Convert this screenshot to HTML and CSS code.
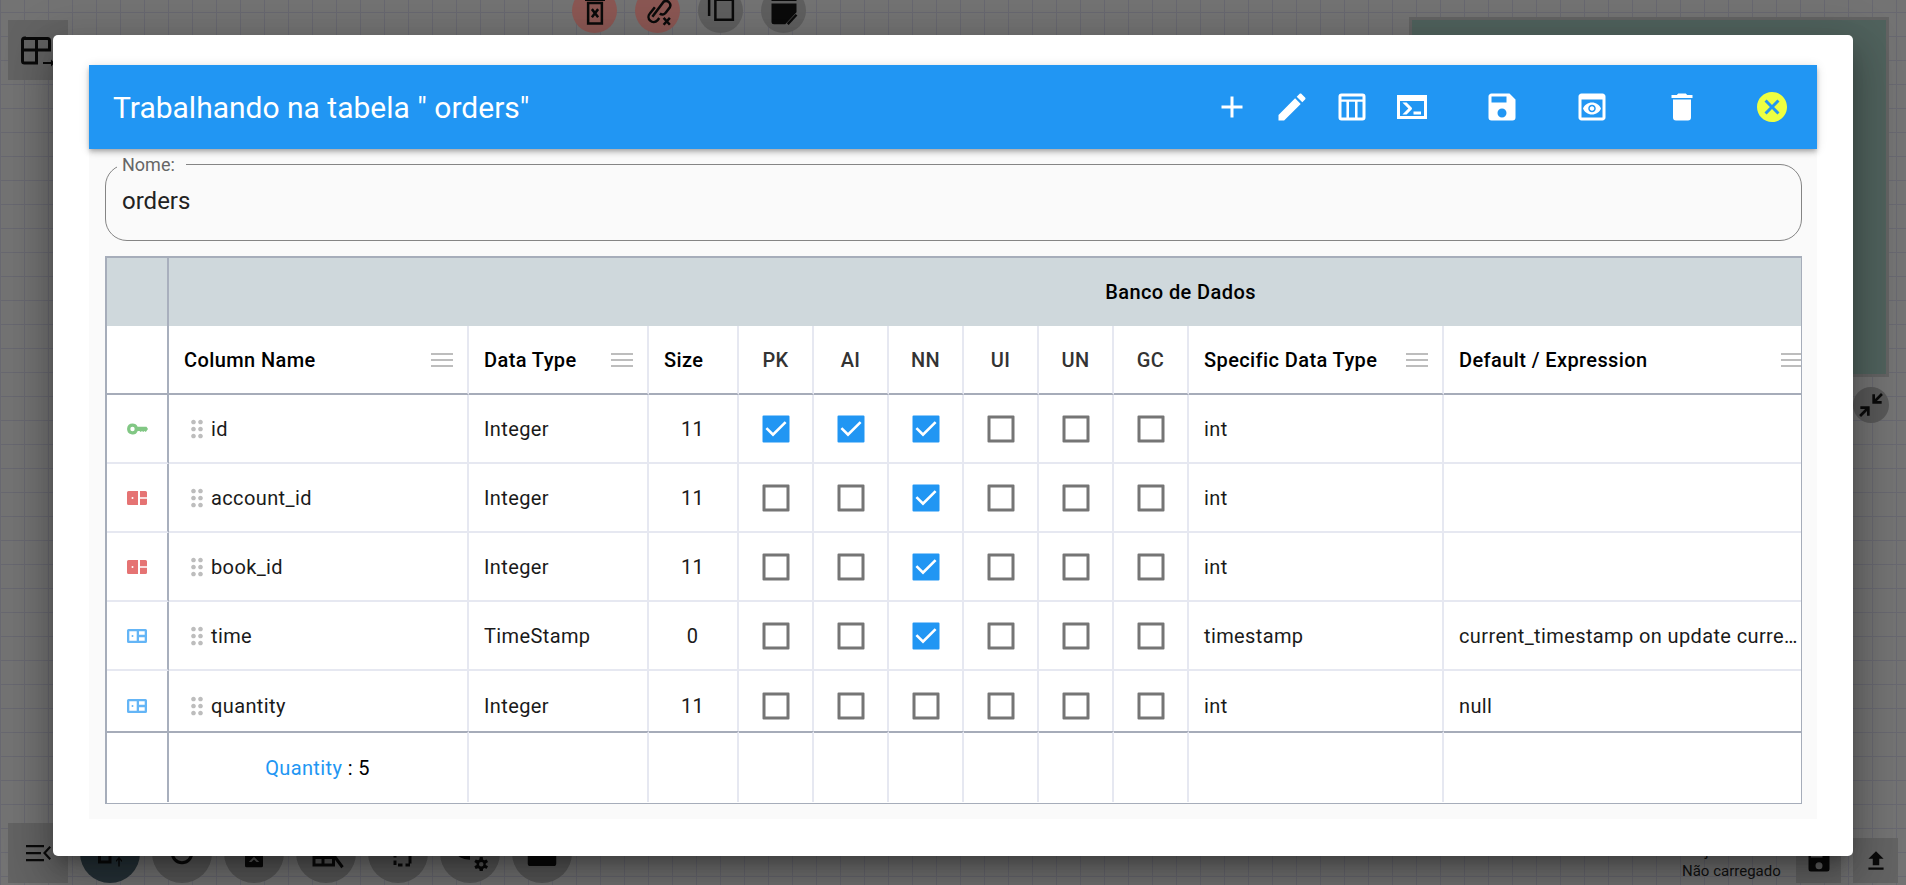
FILE: index.html
```html
<!DOCTYPE html>
<html lang="pt">
<head>
<meta charset="utf-8">
<title>Trabalhando na tabela</title>
<link rel="stylesheet" href="styles.css">
</head>
<body>
<svg class="sprite" aria-hidden="true">
  <symbol id="i-on" viewBox="0 0 24 24"><path fill-rule="evenodd" d="M3.700 3h16.600a.7.7 0 0 1 .7.7v16.600a.7.7 0 0 1-.7.7H3.700a.7.7 0 0 1-.7-.7V3.700a.7.7 0 0 1 .7-.7zM10,17L19,8L17.800,6.900L10,14.500L6.200,10.800L5,12Z"/></symbol>
  <symbol id="i-off" viewBox="0 0 24 24"><path fill-rule="evenodd" d="M3.700 3h16.600a.7.7 0 0 1 .7.7v16.600a.7.7 0 0 1-.7.7H3.700a.7.7 0 0 1-.7-.7V3.700a.7.7 0 0 1 .7-.7zM5 5V19H19V5Z"/></symbol>
  <symbol id="i-drag" viewBox="0 0 24 24"><path d="M11 18c0 1.100-.9 2-2 2s-2-.9-2-2 .9-2 2-2 2 .9 2 2zm-2-8c-1.100 0-2 .9-2 2s.9 2 2 2 2-.9 2-2-.9-2-2-2zm0-6c-1.100 0-2 .9-2 2s.9 2 2 2 2-.9 2-2-.9-2-2-2zm6 4c1.100 0 2-.9 2-2s-.9-2-2-2-2 .9-2 2 .9 2 2 2zm0 2c-1.100 0-2 .9-2 2s.9 2 2 2 2-.9 2-2-.9-2-2-2zm0 6c-1.100 0-2 .9-2 2s.9 2 2 2 2-.9 2-2-.9-2-2-2z"/></symbol>
  <symbol id="i-key" viewBox="0 0 24 24"><path fill-rule="evenodd" d="M7.500 6.500a5.500 5.500 0 0 1 5.100 3.300H21.500L23 12 20.800 15 19.500 14 18.200 15 17 14 15.700 15 14.500 14H12.700A5.500 5.500 0 1 1 7.500 6.500zM7.500 9.800a2.200 2.200 0 1 0 0 4.400 2.200 2.200 0 0 0 0-4.400z"/></symbol>
  <symbol id="i-fk" viewBox="0 0 24 24"><path fill-rule="evenodd" d="M3.500 5H13v14H3.500A1.500 1.500 0 0 1 2 17.500V6.500A1.500 1.500 0 0 1 3.500 5zM7.500 11a1 1 0 1 0 0 2 1 1 0 0 0 0-2zM15 5h5.500A1.500 1.500 0 0 1 22 6.500V11.200H15zM15 12.800h7v4.700a1.500 1.500 0 0 1-1.500 1.500H15z"/></symbol>
  <symbol id="i-col" viewBox="0 0 24 24"><path fill-rule="evenodd" d="M3.500 5h17A1.500 1.500 0 0 1 22 6.500v11a1.500 1.500 0 0 1-1.500 1.500h-17A1.500 1.500 0 0 1 2 17.500v-11A1.500 1.500 0 0 1 3.500 5zM4.300 7.300v9.400h7.400V7.300zM14 7.300v3.500h5.700V7.300zM14 13.200v3.500h5.700v-3.500zM7.500 11a1 1 0 1 0 0 2 1 1 0 0 0 0-2z"/></symbol>
</svg>

<div class="canvas">
  <div class="node"></div>

  <div class="tool tool-tl">
    <svg class="ico-top" viewBox="0 0 34 32"><path class="ln thick" d="M3.500 2.500h23a2 2 0 0 1 2 2v9.500H15.500v13H3.500a2 2 0 0 1-2-2v-21a2 2 0 0 1 2-2zM15.500 2.500v24.500M1.500 14H15.500"/><path d="M22 26h8v-2.500l3.500 3.500-3.500 3.500V28h-8z"/></svg>
  </div>
  <div class="tool tool-bl">
    <svg class="ico-28" viewBox="0 0 28 24"><path d="M2 4h18v2.200H2zM2 11h15v2.200H2zM2 18h18v2.200H2zM27 6.500l-5 5.500 5 5.500-1.500 1.500L19 12l6.500-7z"/></svg>
  </div>

  <div class="row-top">
    <span class="circle-s danger"><svg class="ico-30" viewBox="0 0 24 24"><path class="ln" d="M6.500 5.500h11v16.500h-11zM4 3h16M9 1h6M9.500 10.500l5 6.500M14.500 10.500l-5 6.500"/></svg></span>
    <span class="circle-s danger"><svg class="ico-30" viewBox="0 0 24 24"><path class="ln" d="M9.500 9l-4 5a4 4 0 0 0 6 5.500l1.500-2M7.500 16.500l9-12a3.500 3.500 0 0 1 5 4.500l-3.500 4.500a3 3 0 0 1-4.500 .5"/><path class="ln" d="M16.500 17.500l5 5.500M21.500 17.500l-5 5.500"/></svg></span>
    <span class="circle-s"><svg class="ico-30" viewBox="0 0 24 24"><path class="ln" d="M2.500 0v16M7.500 3h14v16h-14z"/></svg></span>
    <span class="circle-s"><svg class="ico-30" viewBox="0 0 24 24"><path d="M2 0h20v4H2zM2 6h20v7l-9 9.500H4a2 2 0 0 1-2-2z"/><path class="ln" d="M15 22.500l7-7.500"/></svg></span>
  </div>

  <div class="row-bottom">
    <span class="circle-l dark"><svg class="ico-36" viewBox="0 0 24 24"><path class="ln" d="M5 6h7v12H5z"/><path d="M17.500 21v-4.500L16 18v-1.200l2-2.300 2 2.300V18l-1.500-1.500V21z"/></svg></span>
    <span class="circle-l"><svg class="ico-36" viewBox="0 0 24 24"><circle class="ln" cx="12" cy="12" r="6.500"/></svg></span>
    <span class="circle-l"><svg class="ico-36" viewBox="0 0 24 24"><path fill-rule="evenodd" d="M7 3h10a1 1 0 0 1 1 1v16.500a1 1 0 0 1-1 1H7a1 1 0 0 1-1-1V4a1 1 0 0 1 1-1zM12 14.500l-3.500 3.500h1.800l1.700-1.700 1.700 1.700h1.800z"/></svg></span>
    <span class="circle-l"><svg class="ico-36" viewBox="0 0 24 24"><path class="ln" d="M4 5h13v15H4zM4 15h14M10 15v5M16 12l7 9.500"/></svg></span>
    <span class="circle-l"><svg class="ico-36" viewBox="0 0 24 24"><path class="ln dash" d="M3 4h17v15M10 10h10v10H10z"/></svg></span>
    <span class="circle-l"><svg class="ico-36" viewBox="0 0 24 24"><path class="ln thick" d="M4 10c0 3 3 5 8 5"/><path d="M22.500 20l1.500.8-.9 1.700-1.600-.5-.8.6-.2 1.800h-2l-.3-1.800-.8-.5-1.600.5-.9-1.700 1.500-.9v-1l-1.500-1 .9-1.700 1.600.6.8-.5.3-1.800h2l.2 1.800.8.5 1.600-.6.900 1.700-1.500 1zM19.500 18a1.500 1.500 0 1 0 0 3 1.500 1.500 0 0 0 0-3z"/></svg></span>
    <span class="circle-l"><svg class="ico-36" viewBox="0 0 24 24"><path d="M4 3h16a1.500 1.500 0 0 1 1.500 1.500V19a1.700 1.700 0 0 1-1.700 1.700H4.200A1.700 1.700 0 0 1 2.500 19V4.500A1.500 1.500 0 0 1 4 3z"/></svg></span>
  </div>

  <span class="circle-m shrink"><svg class="ico-32" viewBox="0 0 24 24"><path d="M19.500,3.090L15,7.590V4H13V11H20V9H16.410L20.910,4.500L19.500,3.090M4,13V15H7.590L3.090,19.500L4.500,20.910L9,16.410V20H11V13H4Z"/></svg></span>

  <div class="project">Projeto atual:<br>Não carregado</div>
  <div class="tool-sm tool-save"><svg class="ico-28" viewBox="0 0 24 24"><path d="M15,9H5V5H15M12,19A3,3 0 0,1 9,16A3,3 0 0,1 12,13A3,3 0 0,1 15,16A3,3 0 0,1 12,19M17,3H5C3.890,3 3,3.900 3,5V19A2,2 0 0,0 5,21H19A2,2 0 0,0 21,19V7L17,3Z"/></svg></div>
  <div class="tool-sm tool-upload"><svg class="ico-26" viewBox="0 0 24 24"><path d="M9,16V10H5L12,3L19,10H15V16H9M5,20V18H19V20H5Z"/></svg></div>
</div>

<div class="overlay">
  <section class="dialog">
    <header class="bar">
      <h1 class="bar-title">Trabalhando na tabela " orders"</h1>
      <div class="bar-actions">
        <div class="group">
          <button class="act"><svg viewBox="0 0 24 24"><path d="M19,13H13V19H11V13H5V11H11V5H13V11H19V13Z"/></svg></button>
          <button class="act"><svg viewBox="0 0 24 24"><path d="M20.710,7.040C21.100,6.650 21.100,6 20.710,5.630L18.370,3.290C18,2.900 17.350,2.900 16.960,3.290L15.120,5.120L18.870,8.870M3,17.250V21H6.750L17.810,9.930L14.060,6.180L3,17.250Z"/></svg></button>
          <button class="act"><svg viewBox="0 0 24 24"><path fill-rule="evenodd" d="M5 3h14a2 2 0 0 1 2 2v14a2 2 0 0 1-2 2H5a2 2 0 0 1-2-2V5a2 2 0 0 1 2-2zM5 5V7H19V5zM5 8.500V19H8.300V8.500zM10 8.500V19H14V8.500zM15.700 8.500V19H19V8.500z"/></svg></button>
          <button class="act"><svg viewBox="0 0 24 24"><path fill-rule="evenodd" d="M2 4H22V20H2zM4 8V18H20V8zM13,17V15H18V17H13M9.580,13L5.570,9H8.400L11.700,12.300C12.090,12.690 12.090,13.330 11.700,13.720L8.420,17H5.590L9.580,13Z"/></svg></button>
        </div>
        <div class="group">
          <button class="act act-wide"><svg viewBox="0 0 24 24"><path d="M15,9H5V5H15M12,19A3,3 0 0,1 9,16A3,3 0 0,1 12,13A3,3 0 0,1 15,16A3,3 0 0,1 12,19M17,3H5C3.890,3 3,3.900 3,5V19A2,2 0 0,0 5,21H19A2,2 0 0,0 21,19V7L17,3Z"/></svg></button>
          <button class="act act-wide"><svg viewBox="0 0 24 24"><path d="M19 3H5c-1.110 0-2 .9-2 2v14c0 1.100.89 2 2 2h14c1.100 0 2-.9 2-2V5c0-1.100-.89-2-2-2zm0 16H5V7h14v12zm-5.500-6c0 .83-.67 1.500-1.500 1.500s-1.500-.67-1.500-1.500.67-1.500 1.500-1.500 1.500.67 1.500 1.500zM12 9c-2.730 0-5.060 1.660-6 4 .94 2.340 3.270 4 6 4s5.060-1.660 6-4c-.94-2.340-3.270-4-6-4zm0 6.500c-1.380 0-2.500-1.120-2.500-2.500s1.120-2.500 2.500-2.500 2.500 1.120 2.500 2.500-1.120 2.500-2.500 2.500z"/></svg></button>
          <button class="act act-wide"><svg viewBox="0 0 24 24"><path d="M19,4H15.500L14.500,3H9.500L8.500,4H5V6H19M6,19A2,2 0 0,0 8,21H16A2,2 0 0,0 18,19V7H6V19Z"/></svg></button>
          <button class="act act-wide act-close"><svg viewBox="0 0 24 24"><path d="M12,2C17.530,2 22,6.470 22,12C22,17.530 17.530,22 12,22C6.470,22 2,17.530 2,12C2,6.470 6.470,2 12,2M15.590,7L12,10.590L8.410,7L7,8.410L10.590,12L7,15.590L8.410,17L12,13.410L15.590,17L17,15.590L13.410,12L17,8.410L15.590,7Z"/></svg></button>
        </div>
      </div>
    </header>

    <div class="body">
      <fieldset class="field">
        <legend class="field-label">Nome:</legend>
        <input class="field-input" type="text" value="orders" readonly>
      </fieldset>

      <div class="grid-wrap">
        <table class="grid">
          <colgroup>
            <col class="w-flag"><col class="w-name"><col class="w-type"><col class="w-size">
            <col class="w-chk"><col class="w-chk"><col class="w-chk"><col class="w-chk"><col class="w-chk"><col class="w-chk">
            <col class="w-spec"><col class="w-def"><col class="w-rest">
          </colgroup>
          <thead>
            <tr class="band">
              <th class="flag"></th>
              <th colspan="12">Banco de Dados</th>
            </tr>
            <tr class="head">
              <th class="flag"></th>
              <th><div class="h-in">Column Name<span class="menu"></span></div></th>
              <th><div class="h-in">Data Type<span class="menu"></span></div></th>
              <th>Size</th>
              <th class="ck">PK</th><th class="ck">AI</th><th class="ck">NN</th><th class="ck">UI</th><th class="ck">UN</th><th class="ck">GC</th>
              <th><div class="h-in">Specific Data Type<span class="menu"></span></div></th>
              <th><div class="h-in">Default / Expression<span class="menu"></span></div></th>
              <th></th>
            </tr>
          </thead>
          <tbody>
            <tr>
              <td class="flag"><svg class="kind pk"><use href="#i-key"/></svg></td>
              <td class="name"><div class="name-in"><svg class="drag"><use href="#i-drag"/></svg>id</div></td>
              <td>Integer</td><td class="num">11</td>
              <td class="ck"><svg class="box on"><use href="#i-on"/></svg></td><td class="ck"><svg class="box on"><use href="#i-on"/></svg></td><td class="ck"><svg class="box on"><use href="#i-on"/></svg></td>
              <td class="ck"><svg class="box"><use href="#i-off"/></svg></td><td class="ck"><svg class="box"><use href="#i-off"/></svg></td><td class="ck"><svg class="box"><use href="#i-off"/></svg></td>
              <td>int</td><td></td><td></td>
            </tr>
            <tr>
              <td class="flag"><svg class="kind fk"><use href="#i-fk"/></svg></td>
              <td class="name"><div class="name-in"><svg class="drag"><use href="#i-drag"/></svg>account_id</div></td>
              <td>Integer</td><td class="num">11</td>
              <td class="ck"><svg class="box"><use href="#i-off"/></svg></td><td class="ck"><svg class="box"><use href="#i-off"/></svg></td><td class="ck"><svg class="box on"><use href="#i-on"/></svg></td>
              <td class="ck"><svg class="box"><use href="#i-off"/></svg></td><td class="ck"><svg class="box"><use href="#i-off"/></svg></td><td class="ck"><svg class="box"><use href="#i-off"/></svg></td>
              <td>int</td><td></td><td></td>
            </tr>
            <tr>
              <td class="flag"><svg class="kind fk"><use href="#i-fk"/></svg></td>
              <td class="name"><div class="name-in"><svg class="drag"><use href="#i-drag"/></svg>book_id</div></td>
              <td>Integer</td><td class="num">11</td>
              <td class="ck"><svg class="box"><use href="#i-off"/></svg></td><td class="ck"><svg class="box"><use href="#i-off"/></svg></td><td class="ck"><svg class="box on"><use href="#i-on"/></svg></td>
              <td class="ck"><svg class="box"><use href="#i-off"/></svg></td><td class="ck"><svg class="box"><use href="#i-off"/></svg></td><td class="ck"><svg class="box"><use href="#i-off"/></svg></td>
              <td>int</td><td></td><td></td>
            </tr>
            <tr>
              <td class="flag"><svg class="kind col"><use href="#i-col"/></svg></td>
              <td class="name"><div class="name-in"><svg class="drag"><use href="#i-drag"/></svg>time</div></td>
              <td>TimeStamp</td><td class="num">0</td>
              <td class="ck"><svg class="box"><use href="#i-off"/></svg></td><td class="ck"><svg class="box"><use href="#i-off"/></svg></td><td class="ck"><svg class="box on"><use href="#i-on"/></svg></td>
              <td class="ck"><svg class="box"><use href="#i-off"/></svg></td><td class="ck"><svg class="box"><use href="#i-off"/></svg></td><td class="ck"><svg class="box"><use href="#i-off"/></svg></td>
              <td>timestamp</td><td class="clip">current_timestamp on update current_timestamp</td><td></td>
            </tr>
            <tr>
              <td class="flag"><svg class="kind col"><use href="#i-col"/></svg></td>
              <td class="name"><div class="name-in"><svg class="drag"><use href="#i-drag"/></svg>quantity</div></td>
              <td>Integer</td><td class="num">11</td>
              <td class="ck"><svg class="box"><use href="#i-off"/></svg></td><td class="ck"><svg class="box"><use href="#i-off"/></svg></td><td class="ck"><svg class="box"><use href="#i-off"/></svg></td>
              <td class="ck"><svg class="box"><use href="#i-off"/></svg></td><td class="ck"><svg class="box"><use href="#i-off"/></svg></td><td class="ck"><svg class="box"><use href="#i-off"/></svg></td>
              <td>int</td><td>null</td><td></td>
            </tr>
          </tbody>
          <tfoot>
            <tr>
              <td class="flag"></td>
              <td class="sum"><span class="sum-key">Quantity</span> : 5</td>
              <td></td><td></td><td></td><td></td><td></td><td></td><td></td><td></td><td></td><td></td><td></td>
            </tr>
          </tfoot>
        </table>
      </div>
    </div>
  </section>
</div>
</body>
</html>
```

FILE: styles.css
```css
* { box-sizing: border-box; }
html, body { margin: 0; height: 100%; overflow: hidden; }
body { font-family: Roboto, "Liberation Sans", sans-serif; color: #000; background: #737373; }
.sprite { display: none; }

/* dimmed editor canvas behind the dialog */
.canvas {
  position: fixed; inset: 0; overflow: hidden;
  background-color: #737373;
  background-image:
    linear-gradient(to right, #686870 1px, transparent 1px),
    linear-gradient(to bottom, #686870 1px, transparent 1px);
  background-size: 24px 24px;
  background-position: 0 12px;
}
.node { position: absolute; left: 1409px; top: 17px; width: 480px; height: 360px; background: #50625d; border: 3px solid #636363; }
.tool, .tool-sm { position: absolute; display: flex; align-items: center; justify-content: center; background: #636363; }
.tool { width: 60px; height: 60px; left: 8px; }
.tool-tl { top: 20px; justify-content: flex-start; padding-left: 13px; }
.tool-bl { top: 823px; }
.tool-sm { width: 45px; height: 45px; top: 838px; }
.tool-save { left: 1796px; }
.tool-upload { left: 1853px; }
.row-top, .row-bottom { position: absolute; display: flex; }
.row-top { left: 572px; top: -12px; gap: 18px; }
.row-bottom { left: 80px; top: 823px; gap: 12px; }
.circle-s, .circle-l, .circle-m { display: flex; align-items: center; justify-content: center; border-radius: 50%; background: #5f5f5f; }
.circle-s { width: 45px; height: 45px; }
.circle-l { width: 60px; height: 60px; background: #585858; }
.circle-m { width: 36px; height: 36px; background: #585858; }
.danger { background: #8b5753; }
.dark { background: #263238; }
.shrink { position: absolute; left: 1853px; top: 387px; }
.project { position: absolute; left: 1682px; top: 841px; font-size: 15px; line-height: 20px; color: #111; }
.canvas svg { fill: #0a0a0a; }
.canvas .ln { fill: none; stroke: #0a0a0a; stroke-width: 2; }
.canvas .thick { stroke-width: 3; }
.canvas .dash { stroke-dasharray: 3 2; }
.ico-top { width: 34px; height: 32px; flex: none; margin-top: 4px; }
.ico-26 { width: 26px; height: 26px; }
.ico-28 { width: 28px; height: 28px; }
.ico-30 { width: 30px; height: 30px; }
.ico-32 { width: 32px; height: 32px; }
.ico-36 { width: 36px; height: 36px; }

/* dialog */
.overlay { position: fixed; inset: 0; display: flex; justify-content: center; align-items: flex-start; padding-top: 35px; }
.dialog {
  width: 1800px; height: 821px; padding: 30px 36px 0;
  background: #fff; border-radius: 5px;
  box-shadow: 0 11px 15px -7px rgba(0,0,0,.25), 0 24px 38px 3px rgba(0,0,0,.18), 0 9px 46px 8px rgba(0,0,0,.16);
}
.bar {
  position: relative; display: flex; align-items: center; justify-content: space-between;
  height: 84px; padding-left: 24px; background: #2196f3; color: #fff;
  box-shadow: 0 2px 4px -1px rgba(0,0,0,.2), 0 4px 5px 0 rgba(0,0,0,.14), 0 1px 10px 0 rgba(0,0,0,.12);
}
.bar-title { margin: 0; font-size: 30px; font-weight: 400; letter-spacing: 0; }
.bar-actions { display: flex; gap: 15px; }
.group { display: flex; }
.act { display: flex; align-items: center; justify-content: center; width: 60px; height: 60px; padding: 0; border: 0; background: none; }
.act-wide { width: 90px; }
.act svg { width: 36px; height: 36px; fill: #fff; }
.act-close svg { fill: #eeff41; }

.body { height: 670px; padding: 5px 15px 0 16px; background: #fafafa; }
.field { display: block; height: 87px; margin: 0; padding: 0 16px; border: 1px solid #858585; border-radius: 22px; }
.field-label { margin-left: -5px; padding: 0 11px 0 5px; font-size: 18px; line-height: 21px; color: #666; }
.field-input { display: block; width: 100%; margin-top: 8px; padding: 0; border: 0; outline: 0; background: transparent; font: 24px/36px Roboto, sans-serif; color: #222; }

.grid-wrap { height: 548px; margin-top: 15px; padding: 0 2px 1px 0; border: solid #a6adba; border-width: 2px 1px 1px 2px; overflow: hidden; background: #fff; }
.grid { table-layout: fixed; width: 2086px; border-collapse: separate; border-spacing: 0; font-size: 20px; letter-spacing: .38px; }
.w-flag { width: 62px; }
.w-name { width: 300px; }
.w-type { width: 180px; }
.w-size { width: 90px; }
.w-chk { width: 75px; }
.w-spec { width: 255px; }
.w-def { width: 375px; }
.w-rest { width: 374px; }
.grid th, .grid td { padding: 0 16px 0 15px; text-align: left; white-space: nowrap; border-right: 2px solid #e6e8f1; background: #fff; }
.grid th { font-weight: 500; letter-spacing: .4px; }
.grid .flag { padding: 0; text-align: center; border-right: 2px solid #a8afbd; }
.band th { height: 68px; background: #cfd8dc; border-right: 0; text-align: center; }
.band .flag { background: #cfd8dc; }
.head th { height: 69px; border-bottom: 2px solid #a6acb9; }
.grid .h-in { display: flex; align-items: center; justify-content: space-between; margin-right: -2px; }
.menu { width: 22px; height: 14px; border-top: 2px solid #bdbdbd; border-bottom: 2px solid #bdbdbd; position: relative; }
.menu::after { content: ""; position: absolute; left: 0; right: 0; top: 4px; height: 2px; background: #bdbdbd; }
.grid .ck { padding: 0; text-align: center; color: #333; }
.grid tbody td { height: 69px; border-bottom: 2px solid #e6e8f1; color: #1a1a1a; }
.grid tbody tr:last-child td { border-bottom: 0; }
.grid .num { text-align: center; }
.grid .name { padding-left: 14px; }
.name-in { display: flex; align-items: center; }
.drag { width: 28px; height: 28px; fill: #bdbdbd; flex: none; }
.box { display: block; width: 36px; height: 36px; margin: 0 auto; fill: #757575; }
.box.on { fill: #2196f3; }
.kind { display: block; width: 24px; height: 24px; margin: 0 auto; }
.pk { fill: #81c784; }
.fk { fill: #e57373; }
.col { fill: #64b5f6; }
.clip { overflow: hidden; text-overflow: ellipsis; }
.grid tfoot td { position: sticky; bottom: 0; height: 71px; border-top: 2px solid #a6acb9; }
.grid tfoot .sum { text-align: center; }
.sum-key { color: #2196f3; }
```
